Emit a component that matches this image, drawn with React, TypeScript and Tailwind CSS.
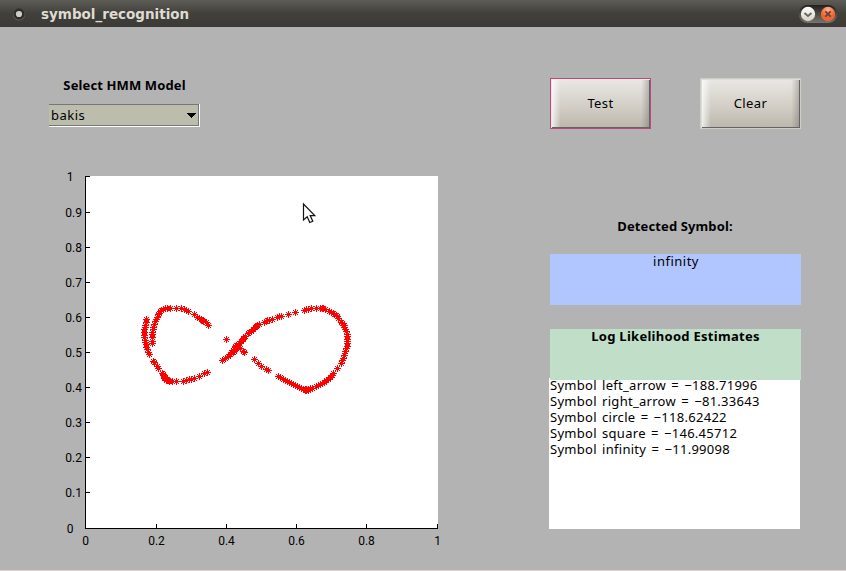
import React from "react";

const strokePoints: [number, number][] = [
  // left lobe, outer sweep
  [34,72],[33,82],[31,90],[30,97],[28,104],[28,112],[29,120],[28,128],[31,135],[32,142],[33,149],[34,156],[37,163],[41,173],[43,178],[55,200],[58,203],[66,214],[70,219],[82,235],[84,241],[88,246],[90,251],[94,255],[88,250],[91,247],[85,238],[97,253],[100,257],[103,259],[112,260],[124,260],[145,260],[154,256],[162,254],[170,252],[178,250],[193,244],[208,235],[218,232],
  // left lobe, inner sweep
  [53,146],[52,138],[52,128],[52,119],[53,111],[54,104],[56,96],[58,88],[61,80],[63,73],[66,66],[69,59],[72,54],[76,49],[80,45],[86,42],[92,41],[98,40],[107,41],[124,40],[140,41],[147,43],[153,45],[160,48],[177,59],[188,66],[194,69],[198,73],[202,76],[206,79],[213,83],[221,92],[274,133],
  // crossing
  [262,197],[270,191],[280,184],[286,177],[290,172],[294,167],[298,162],[302,158],[306,153],[312,146],[318,139],[325,132],[304,151],[300,155],[294,173],[298,168],[302,163],[316,160],[325,168],[308,157],
  // right lobe, top
  [319,138],[324,130],[331,123],[339,115],[344,111],[349,108],[355,104],[360,98],[364,94],[367,92],[373,89],[387,82],[393,79],[398,76],[403,75],[412,73],[427,67],[433,65],[440,64],[460,58],[481,52],[508,46],[515,44],[521,42],[529,40],[544,41],[557,40],[562,40],[565,41],[570,43],[583,49],[589,52],[594,55],[599,58],[603,61],[607,65],[610,69],
  // right lobe, right side
  [618,82],[623,86],[627,92],[629,98],[632,104],[634,110],[636,118],[637,125],[637,132],[637,139],[637,146],[636,153],[634,160],[632,170],[627,181],[625,189],[621,197],[618,204],[607,219],[595,234],[591,240],
  // right lobe, bottom
  [585,248],[581,254],[575,257],[569,261],[562,265],[556,269],[549,272],[543,275],[531,279],[525,281],[520,283],[515,284],[510,283],[505,282],[515,287],[520,286],[510,286],[498,280],[492,277],[486,274],[480,271],[474,268],[468,265],[462,262],[456,259],[450,255],[444,252],[437,248],[430,244],[400,226],[393,223],[379,214],[370,205],[358,193],[328,172],
];

const yTicks = [
  { y: 11, label: "1" }, { y: 47, label: "0.9" }, { y: 82, label: "0.8" },
  { y: 117, label: "0.7" }, { y: 152, label: "0.6" }, { y: 187, label: "0.5" },
  { y: 222, label: "0.4" }, { y: 257, label: "0.3" }, { y: 292, label: "0.2" },
  { y: 327, label: "0.1" }, { y: 363, label: "0" },
];
const xTicks = [
  { x: 36, label: "0" }, { x: 107, label: "0.2" }, { x: 177, label: "0.4" },
  { x: 247, label: "0.6" }, { x: 317, label: "0.8" }, { x: 388, label: "1" },
];

const estimates = [
  "Symbol left_arrow = −188.71996",
  "Symbol right_arrow = −81.33643",
  "Symbol circle = −118.62422",
  "Symbol square = −146.45712",
  "Symbol infinity = −11.99098",
];

function TitleBar() {
  return (
    <header className="flex h-[27px] items-center bg-linear-to-b from-[#5d5c56] via-[#41403b] to-[#3b3a36] pl-[12px] pr-[6px]">
      <svg width="14" height="14" viewBox="0 0 14 14">
        <circle cx="7" cy="7.5" r="6" fill="#6b6963" />
        <circle cx="7" cy="7" r="5.7" fill="#2f2e2b" />
        <circle cx="7" cy="7" r="3.1" fill="#d0cdc5" />
      </svg>
      <h1 className="ml-[15px] grow pt-px font-['DejaVu_Sans',sans-serif] text-[13.5px] leading-[26px] font-bold text-[#dfdbd2]">symbol_recognition</h1>
      <svg width="42" height="22" viewBox="798 3 42 22">
        <defs>
          <linearGradient id="tray" x2="0" y2="1"><stop stopColor="#20201d" /><stop offset="1" stopColor="#77756e" /></linearGradient>
          <linearGradient id="min" x2="0" y2="1"><stop stopColor="#ffffff" /><stop offset="1" stopColor="#d6d0c2" /></linearGradient>
          <radialGradient id="close" cy="0.2"><stop stopColor="#ffb294" /><stop offset="1" stopColor="#f1652e" /></radialGradient>
        </defs>
        <rect x="798.5" y="5" width="39" height="18" rx="9" fill="url(#tray)" />
        <circle cx="808" cy="14" r="7.2" fill="url(#min)" />
        <path d="M804.5 13L808 16L811.5 13" fill="none" stroke="#68675f" strokeWidth="1.8" />
        <circle cx="828" cy="14" r="7.2" fill="url(#close)" />
        <path d="M825.3 11.3L830.7 16.7M830.7 11.3L825.3 16.7" stroke="#654437" strokeWidth="1.8" />
      </svg>
    </header>
  );
}

function PushButton({ label, frame }: { label: string; frame: string }) {
  return (
    <button className={`h-[51px] w-[101px] border pt-px pl-px ${frame}`}>
      <span className="flex size-full items-center justify-center border-r border-b border-[#64636a] bg-[linear-gradient(90deg,rgba(255,255,255,0.75),transparent_9%,transparent_92%,rgba(100,95,85,0.35)),linear-gradient(#e8e7e3,#d3cfc7_55%,#bdb8ae)] text-[13px] tracking-[0.4px]">
        {label}
      </span>
    </button>
  );
}

function Plot() {
  return (
    <svg className="ml-px mt-[38px] block" width="400" height="396" viewBox="0 0 400 396" fontFamily="Roboto, sans-serif" fontSize="12" shapeRendering="crispEdges">
      <rect x="35" y="11" width="353" height="353" fill="#fff" />
      <path d="M35.5 11V363.5H388" fill="none" stroke="#000" />
      {yTicks.map(({ y, label }) => (
        <g key={label}>
          <path d={`M35 ${y + 0.5}h5`} stroke="#000" />
          <text x={label.length === 1 ? 23.5 : 32} y={y + 5} textAnchor="end">{label}</text>
        </g>
      ))}
      {xTicks.map(({ x, label }) => (
        <g key={label}>
          <path d={`M${x - 0.5} 364v-5`} stroke="#000" />
          <text x={x - 0.5} y="380" textAnchor="middle">{label}</text>
        </g>
      ))}
      {strokePoints.map(([px, py], i) => {
        const x = Math.floor(px / 3) + 85;
        const y = Math.floor(py / 3) + 130;
        return (
          <g key={i} transform={`translate(${x} ${y})`} fill="#f00">
            <path d="M-3 0h7v1h-7zM0-3h1v7h-1zM-2-2h1v1h-1zM-1-1h1v1h-1zM1 1h1v1h-1zM2 2h1v1h-1zM2-2h1v1h-1zM1-1h1v1h-1zM-1 1h1v1h-1zM-2 2h1v1h-1z" />
          </g>
        );
      })}
    </svg>
  );
}

export default function App() {
  return (
    <div className="relative flex h-[571px] w-[846px] flex-col overflow-hidden border-b border-[#d9d4ca] bg-[#b3b3b3] font-['Noto_Sans','Open_Sans',sans-serif] text-[13px] text-black">
      <TitleBar />
      <main className="flex grow pl-[49px]">
        <section className="w-[500px] pt-[50px]">
          <h2 className="w-[151px] text-center text-[13px] leading-[17px] font-bold tracking-[0.12px]">Select HMM Model</h2>
          <div className="mt-[10px] flex h-[23px] w-[151px] border-r border-b border-white">
            <div className="flex grow items-center justify-between border-t border-r border-b border-[#777] bg-[#bdbdae] pr-[2px] pl-[2px]">
              <span className="leading-[18px] tracking-[0.5px]">bakis</span>
              <svg width="9" height="5" viewBox="0 0 9 5" shapeRendering="crispEdges"><path d="M0 0h9v1h-1v1h-1v1h-1v1h-1v1h-1v-1h-1v-1h-1v-1h-1v-1h-1z" /></svg>
            </div>
          </div>
          <Plot />
        </section>
        <section className="w-[252px] pt-[51px]">
          <div className="flex justify-between pl-px">
            <PushButton label="Test" frame="border-[#b74a7c] bg-[#e9e8e5]" />
            <PushButton label="Clear" frame="border-[#d1cdc4] bg-[#dcdcda]" />
          </div>
          <h2 className="mt-[89px] text-center text-[13px] leading-[17px] font-bold tracking-[0.12px]">Detected Symbol:</h2>
          <div className="mt-[19px] ml-px h-[51px] bg-[#b1c6ff] pl-px text-center text-[13px] leading-[14px] tracking-[0.5px]">infinity</div>
          <h2 className="relative z-10 mt-[24px] ml-px h-[51px] bg-[#c1dec8] text-center text-[13px] leading-[15px] font-bold tracking-[0.28px]">Log Likelihood Estimates</h2>
          <div className="-mt-[2px] h-[151px] w-[251px] bg-white pl-px">
            {estimates.map((text) => (
              <p key={text} className="h-[16px] leading-[14px] tracking-[0.28px] [word-spacing:1.6px] whitespace-nowrap">{text}</p>
            ))}
          </div>
        </section>
      </main>
      <svg className="absolute top-[202px] left-[301px]" width="16" height="24" viewBox="0 0 16 24">
        <path d="M2.5 2V18L6.2 14.7L8.8 20.5L11.8 19.2L9.2 13.6H13.8Z" fill="#fff" stroke="#111" strokeWidth="1.2" />
      </svg>
    </div>
  );
}
